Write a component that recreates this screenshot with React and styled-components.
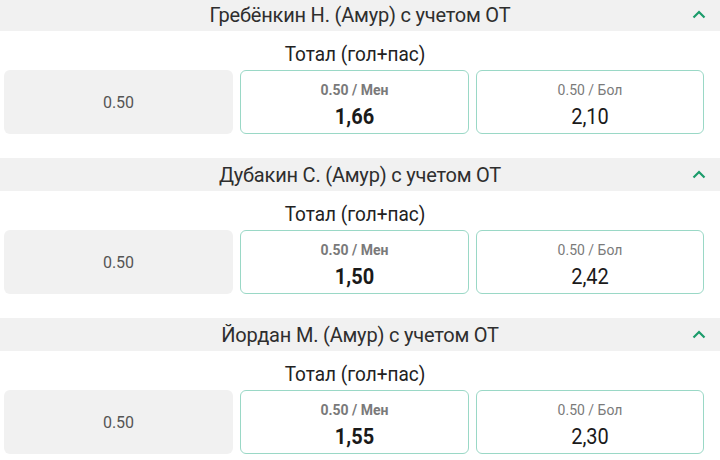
import React from "react";
import styled, { createGlobalStyle } from "styled-components";

const Global = createGlobalStyle`
  html, body { margin: 0; padding: 0; background: #fff; }
  body { font-family: Roboto, "Noto Sans", sans-serif; overflow: hidden; }
`;

const Page = styled.div`
  width: 720px;
  height: 460px;
  margin-top: -2px;
  display: flex;
  flex-direction: column;
`;

const Section = styled.section`
  display: flex;
  flex-direction: column;
  padding-bottom: 24px;
`;

const Header = styled.div`
  height: 33px;
  background: #f1f1f1;
  display: flex;
  align-items: center;
  justify-content: center;
  position: relative;
  font-size: 20px;
  color: #2e2e2e;
  letter-spacing: -0.2px;
  padding-top: 1px;
  box-sizing: border-box;
`;

const Chevron = styled.svg`
  position: absolute;
  right: 14px;
  top: 12px;
`;

const Market = styled.div`
  height: 39px;
  box-sizing: border-box;
  padding-top: 13px;
  padding-right: 10px;
  display: flex;
  justify-content: center;
  font-size: 19px;
  line-height: 22px;
  color: #222;
  & > span { display: inline-block; transform: scaleY(1.1); }
`;

const Row = styled.div`
  display: grid;
  grid-template-columns: 229px 229px 228px;
  gap: 7px;
  padding-left: 4px;
  height: 64px;
`;

const Param = styled.div`
  background: #f1f1f1;
  border-radius: 6px;
  display: flex;
  align-items: center;
  justify-content: center;
  font-size: 16px;
  color: #555;
`;

const Odd = styled.div`
  border: 1.5px solid #9ad8c6;
  border-radius: 6px;
  display: flex;
  flex-direction: column;
  align-items: center;
  justify-content: center;
  gap: 7px;
  padding-top: 5px;
  box-sizing: border-box;
  font-weight: ${(p) => (p.$bold ? 700 : 400)};
`;

const OddLabel = styled.div`
  font-size: 14px;
  color: #7a7a7a;
  line-height: 16px;
  transform: scaleY(1.05);
`;

const OddValue = styled.div`
  font-size: 20px;
  color: #1a1a1a;
  line-height: 22px;
  transform: scaleY(1.08);
`;

const data = [
  { name: "Гребёнкин Н. (Амур) с учетом ОТ", under: "1,66", over: "2,10" },
  { name: "Дубакин С. (Амур) с учетом ОТ", under: "1,50", over: "2,42" },
  { name: "Йордан М. (Амур) с учетом ОТ", under: "1,55", over: "2,30" },
];

export default function App() {
  return (
    <>
      <Global />
      <Page>
        {data.map((d) => (
          <Section key={d.name}>
            <Header>
              {d.name}
              <Chevron width="14" height="9" viewBox="0 0 14 9">
                <path d="M1.5 7.5 L7 2 L12.5 7.5" fill="none" stroke="#1b9c6b" strokeWidth="2.2" />
              </Chevron>
            </Header>
            <Market>
              <span>Тотал (гол+пас)</span>
            </Market>
            <Row>
              <Param>0.50</Param>
              <Odd $bold>
                <OddLabel>0.50 / Мен</OddLabel>
                <OddValue>{d.under}</OddValue>
              </Odd>
              <Odd>
                <OddLabel>0.50 / Бол</OddLabel>
                <OddValue>{d.over}</OddValue>
              </Odd>
            </Row>
          </Section>
        ))}
      </Page>
    </>
  );
}
